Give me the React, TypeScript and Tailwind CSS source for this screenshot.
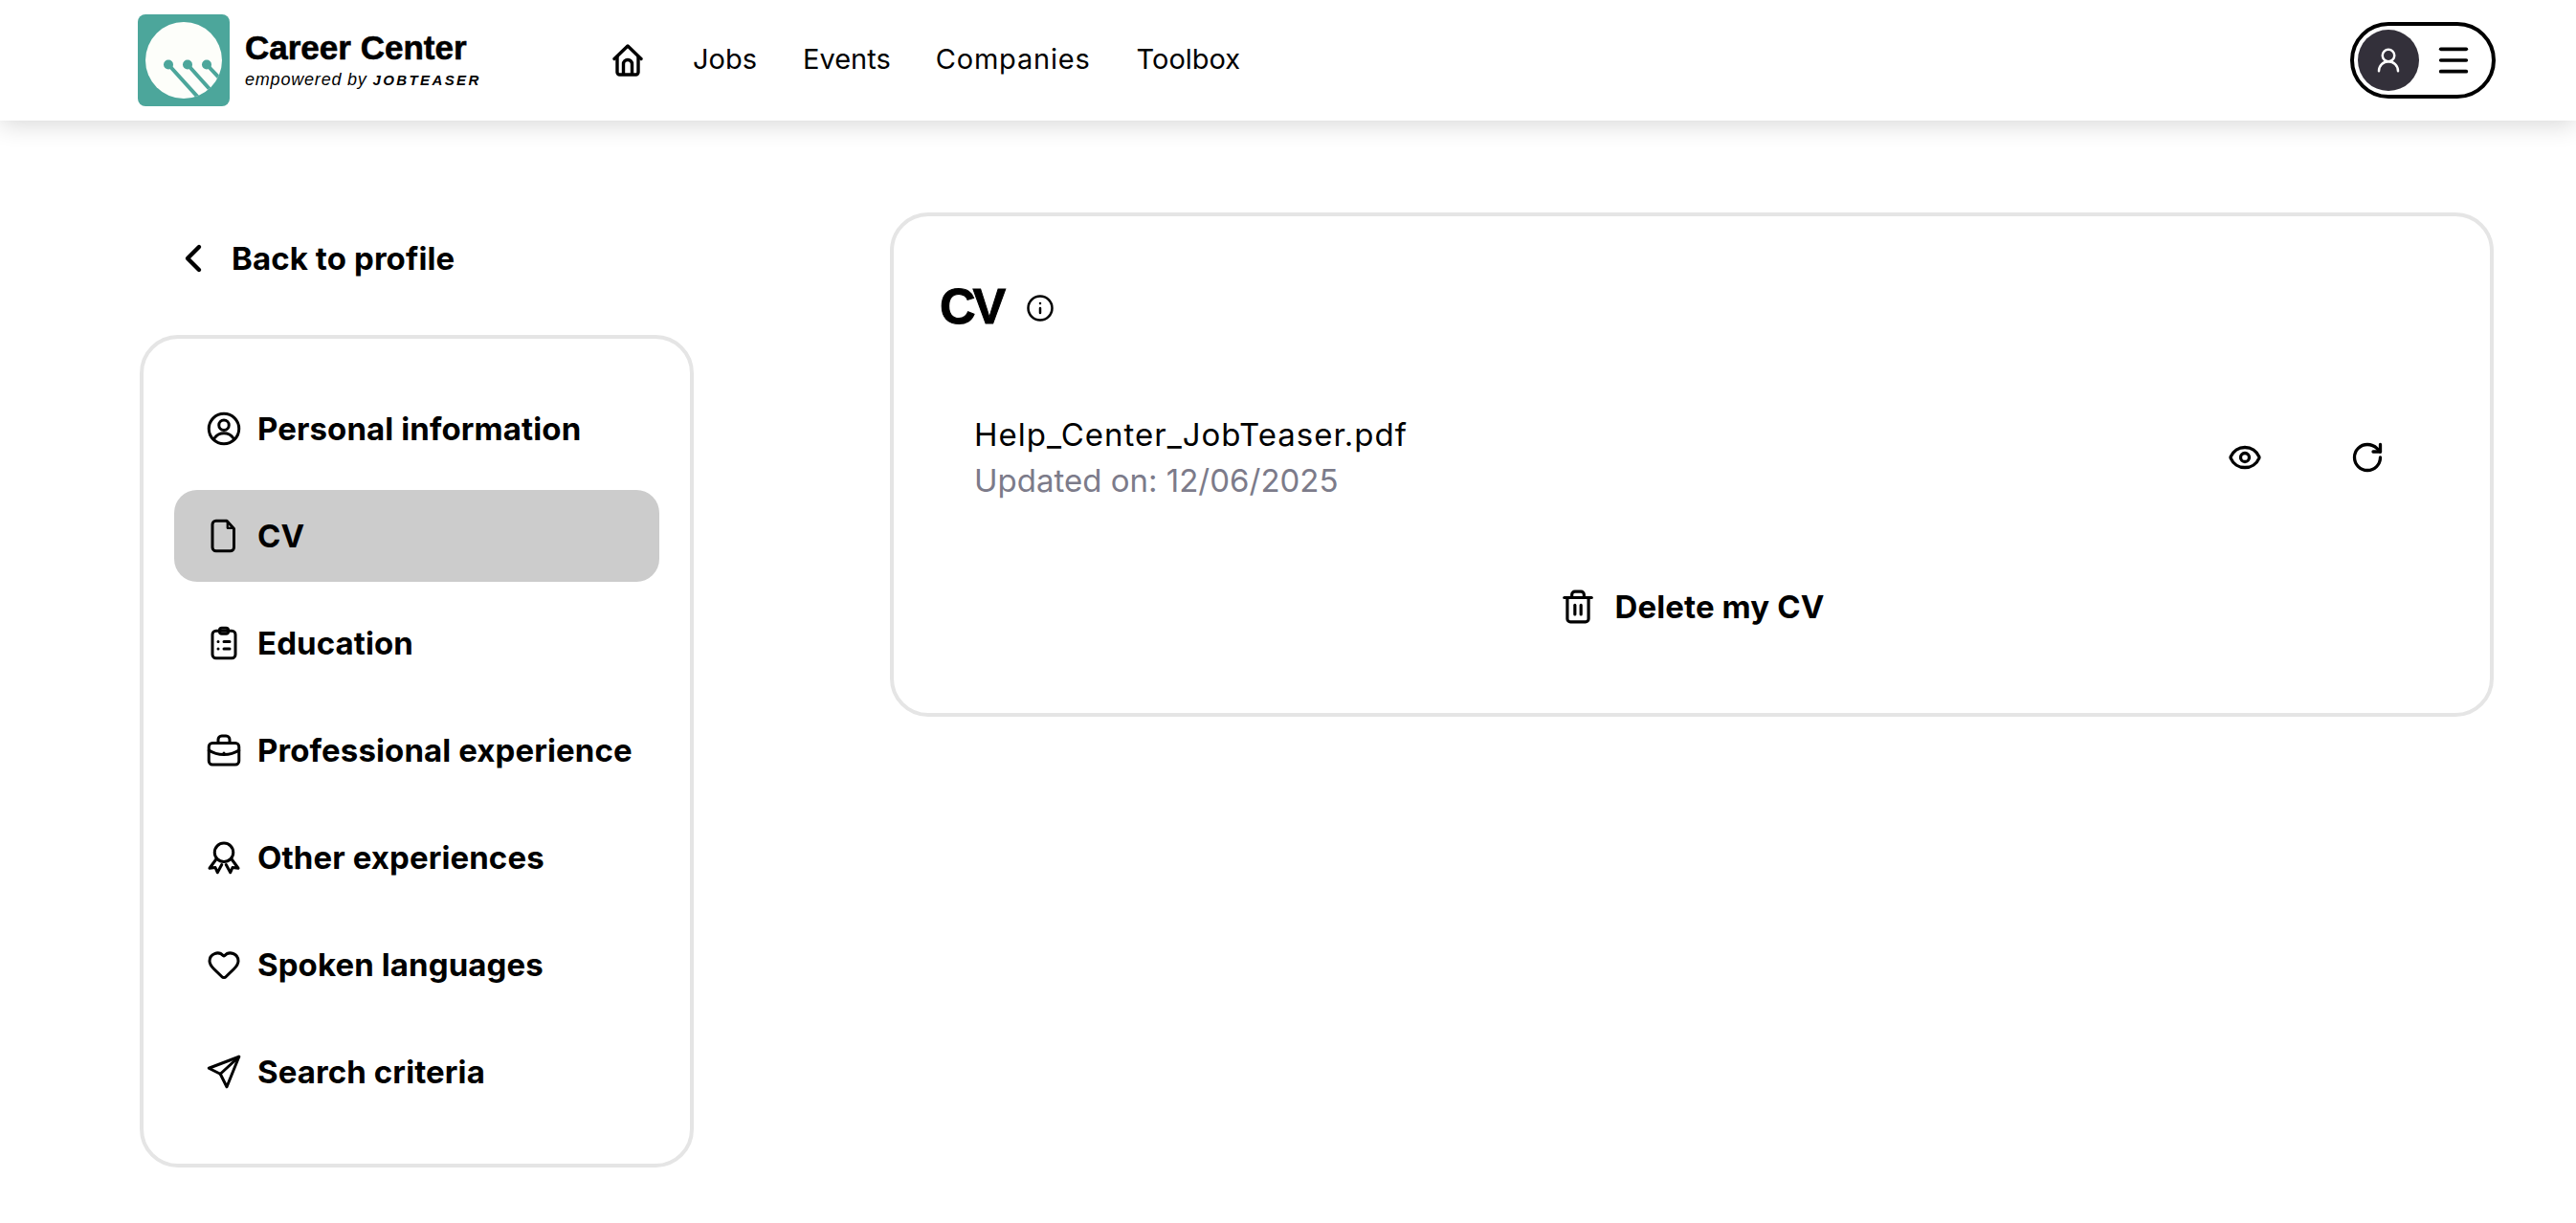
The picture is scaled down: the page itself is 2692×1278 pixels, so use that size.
import { ChevronLeft, Eye, Heart, Info, Menu, RotateCw, Trash2, UserRound } from 'lucide-react'
import type { ReactNode } from 'react'

const svgProps = {
	viewBox: '0 0 24 24',
	fill: 'none',
	stroke: 'currentColor',
	strokeWidth: 2,
	strokeLinecap: 'round' as const,
	strokeLinejoin: 'round' as const,
	className: 'h-[36px] w-[36px] shrink-0',
}

const ProfileIcon = () => (
	<svg {...svgProps}>
		<circle cx="12" cy="12" r="10.5" />
		<circle cx="12" cy="9.5" r="3.5" />
		<path d="M5.5 18.5c1.5-2.4 3.8-3.4 6.5-3.4s5 1 6.5 3.4" />
	</svg>
)

const FileIcon = () => (
	<svg {...svgProps}>
		<path d="M6.5 1.5H14l5 5.5v13a2.5 2.5 0 0 1-2.5 2.5h-10A2.5 2.5 0 0 1 4 20V4a2.5 2.5 0 0 1 2.5-2.5z" />
		<path d="M14.5 2.5v4h4" strokeWidth="1.5" />
	</svg>
)

const ClipboardIcon = () => (
	<svg {...svgProps}>
		<rect x="4" y="3.5" width="16" height="19" rx="2.5" />
		<rect x="9" y="1.5" width="6" height="4" rx="1.5" />
		<path d="M8 11h.01M12 11h4M8 16h.01M12 16h4" />
	</svg>
)

const BriefcaseIcon = () => (
	<svg {...svgProps}>
		<rect x="1.5" y="7" width="21" height="15" rx="2.5" />
		<path d="M8 7V4.5A2.500 2.500 0 0 1 10.500 2h3A2.500 2.500 0 0 1 16 4.500V7" />
		<path d="M1.500 12c3 2 6.500 3 10.500 3s7.500-1 10.500-3" />
		<path d="M12 14v.01" />
	</svg>
)

const RibbonIcon = () => (
	<svg {...svgProps}>
		<circle cx="12" cy="8.5" r="6.5" />
		<path d="M6.800 13 2 19.500l4-.5 1.500 3.500 3-5.500" />
		<path d="M17.200 13 22 19.500l-4-.5-1.500 3.500-3-5.500" />
	</svg>
)

const SendIcon = () => (
	<svg {...svgProps}>
		<path d="M22.500 1.500 1.500 9.500l8 4 4.500 9z" />
		<path d="M22.500 1.500 9.500 13.500" />
	</svg>
)

const HomeIcon = () => (
	<svg viewBox="0 0 32 34" fill="none" stroke="currentColor" strokeWidth="3.4" strokeLinejoin="round" className="h-[34px] w-[32px]">
		<path d="M2 15.500 16 2l14 13.500" strokeLinecap="round" />
		<path d="M5 13v16.500A2.500 2.500 0 0 0 7.500 32h17a2.500 2.500 0 0 0 2.500-2.500V13" />
		<path d="M11.500 32V21a4.500 4.500 0 0 1 9 0v11" />
	</svg>
)

const Logo = () => (
	<svg viewBox="0 0 96 96" className="h-[96px] w-[96px] shrink-0">
		<rect width="96" height="96" rx="8" fill="#4ca69b" />
		<defs>
			<clipPath id="disc">
				<circle cx="48" cy="48" r="40" />
			</clipPath>
		</defs>
		<circle cx="48" cy="48" r="40" fill="#fdfefa" />
		<g clipPath="url(#disc)" stroke="#4ca69b" strokeWidth="4" fill="#4ca69b">
			<circle cx="32" cy="52.500" r="5" stroke="none" />
			<circle cx="52" cy="52.500" r="5" stroke="none" />
			<circle cx="72" cy="52.500" r="5" stroke="none" />
			<path d="M32 52.500 66 90M52 52.500 84 88M72 52.500 96 78" />
		</g>
	</svg>
)

const navLinks = [
	{ label: 'Jobs', className: 'ml-[52px]' },
	{ label: 'Events', className: 'ml-[48px]' },
	{ label: 'Companies', className: 'ml-[47px] tracking-[0.8px]' },
	{ label: 'Toolbox', className: 'ml-[48px]' },
]

const sections: { label: string; icon: ReactNode; active?: boolean }[] = [
	{ label: 'Personal information', icon: <ProfileIcon /> },
	{ label: 'CV', icon: <FileIcon />, active: true },
	{ label: 'Education', icon: <ClipboardIcon /> },
	{ label: 'Professional experience', icon: <BriefcaseIcon /> },
	{ label: 'Other experiences', icon: <RibbonIcon /> },
	{ label: 'Spoken languages', icon: <Heart className="h-[36px] w-[36px] shrink-0" strokeWidth={2} /> },
	{ label: 'Search criteria', icon: <SendIcon /> },
]

export default function App() {
	return (
		<div className="flex min-h-[1278px] flex-col bg-white font-['Inter',sans-serif] text-black">
			<header className="flex h-[126px] items-center bg-white pl-[144px] pr-[84px] shadow-[0_4px_24px_rgba(0,0,0,0.16)]">
				<Logo />
				<div className="ml-[16px] w-[384px] font-['Liberation_Sans',sans-serif]">
					<div className="mb-[3px] text-[35px] font-bold leading-[38px] [-webkit-text-stroke:0.6px_black]">Career Center</div>
					<div className="text-[18px] italic leading-[22px] tracking-[0.8px]">
						empowered by <span className="text-[15px] font-bold tracking-[2.4px]">JOBTEASER</span>
					</div>
				</div>
				<HomeIcon />
				{navLinks.map((link) => (
					<a key={link.label} className={`mb-[3px] text-[29px] leading-[40px] ${link.className}`}>
						{link.label}
					</a>
				))}
				<div className="ml-auto flex h-[80px] w-[152px] items-center rounded-full border-[4px] border-black pl-[4px]">
					<div className="flex h-[64px] w-[64px] items-center justify-center rounded-full bg-[#33303a]">
						<UserRound className="h-[30px] w-[30px] text-white" strokeWidth={2} />
					</div>
					<Menu className="ml-[16px] h-[40px] w-[40px]" strokeWidth={2.2} />
				</div>
			</header>

			<main className="flex items-start pl-[146px] pt-[96px]">
				<aside className="w-[579px]">
					<div className="flex h-[96px] items-center pl-[32px]">
						<ChevronLeft className="h-[48px] w-[48px]" strokeWidth={2.2} />
						<span className="ml-[16px] text-[33px] font-bold leading-[40px] tracking-[0.1px]">Back to profile</span>
					</div>
					<nav className="mt-[32px] flex flex-col gap-[16px] rounded-[40px] border-[4px] border-[#e5e5e5] px-[32px] pb-[48px] pt-[46px]">
						{sections.map((section) => (
							<a
								key={section.label}
								className={`flex h-[96px] items-center gap-[17px] rounded-[24px] pl-[34px] ${section.active ? 'bg-[#cccccc]' : ''}`}
							>
								{section.icon}
								<span className="text-[33px] font-bold leading-[40px] tracking-[0.1px]">{section.label}</span>
							</a>
						))}
					</nav>
				</aside>

				<section className="ml-[205px] w-[1676px] rounded-[40px] border-[4px] border-[#e5e5e5] px-[48px] pb-[91px] pt-[59px]">
					<div className="flex items-center">
						<h1 className="font-['Liberation_Sans',sans-serif] text-[52px] font-bold leading-[70px] tracking-[-3px] [-webkit-text-stroke:1px_black]">CV</h1>
						<Info className="ml-[24px] mt-[4px] h-[30px] w-[30px]" strokeWidth={2} />
					</div>
					<div className="mt-[75px] flex items-center pl-[36px]">
						<div className="flex-1">
							<p className="text-[33px] leading-[48px] tracking-[1px]">Help_Center_JobTeaser.pdf</p>
							<p className="text-[33px] leading-[48px] text-[#7c7b8a]">Updated on: 12/06/2025</p>
						</div>
						<Eye className="h-[36px] w-[36px]" strokeWidth={2.2} />
						<RotateCw className="ml-[92px] mr-[62px] h-[36px] w-[36px]" strokeWidth={2.2} />
					</div>
					<div className="mt-[88px] flex items-center justify-center gap-[20px]">
						<Trash2 className="h-[38px] w-[38px]" strokeWidth={2} />
						<span className="text-[33px] font-bold leading-[40px] tracking-[0.1px]">Delete my CV</span>
					</div>
				</section>
			</main>
		</div>
	)
}
